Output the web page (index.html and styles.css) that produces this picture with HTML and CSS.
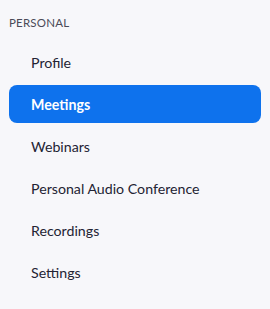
FILE: index.html
```html
<!DOCTYPE html>
<html lang="en">
  <head>
    <meta charset="UTF-8" />
    <title>Personal</title>
    <link rel="stylesheet" href="styles.css">
  </head>
  <body>
    <nav class="sidebar">
      <h4 class="section-title">PERSONAL</h4>
      <ul class="menu">
        <li><a class="menu-item" href="#">Profile</a></li>
        <li><a class="menu-item active" href="#">Meetings</a></li>
        <li><a class="menu-item" href="#">Webinars</a></li>
        <li><a class="menu-item" href="#">Personal Audio Conference</a></li>
        <li><a class="menu-item" href="#">Recordings</a></li>
        <li><a class="menu-item" href="#">Settings</a></li>
      </ul>
    </nav>
  </body>
</html>
```

FILE: styles.css
```css
* {
  margin: 0;
  padding: 0;
  box-sizing: border-box;
  font-family: Lato, 'Open Sans', sans-serif;
}

body {
  background-color: #f7f7fa;
  color: #232333;
  min-height: 100vh;
}

.sidebar {
  padding: 15px 9px 0;
}

.section-title {
  font-size: 11.5px;
  font-weight: normal;
  line-height: 16px;
  color: #4a4a57;
  letter-spacing: 0.2px;
  margin-bottom: 12px;
}

.menu {
  list-style: none;
  display: flex;
  flex-direction: column;
  gap: 4px;
}

.menu-item {
  display: flex;
  align-items: center;
  height: 38px;
  padding-left: 22px;
  border-radius: 8px;
  font-size: 14.2px;
  color: #232333;
  text-decoration: none;
}

.menu-item.active {
  background: #0e72ed;
  color: #ffffff;
  font-weight: bold;
}
```
